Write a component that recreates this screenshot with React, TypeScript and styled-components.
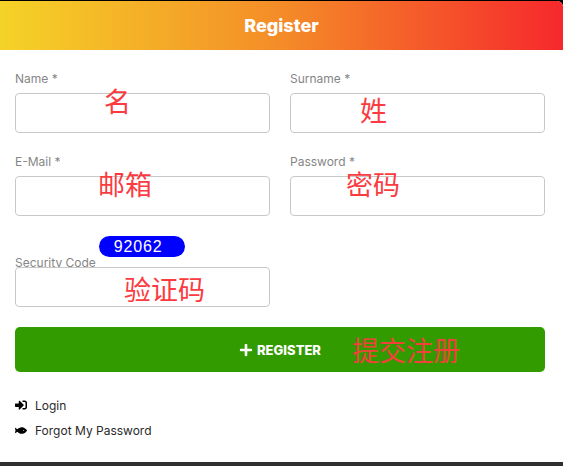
import React from 'react'
import styled, { createGlobalStyle } from 'styled-components'
import { FaFish, FaPlus, FaSignInAlt } from 'react-icons/fa'

const GlobalStyle = createGlobalStyle`
  html, body {
    margin: 0;
    padding: 0;
    background: #2f2f2f;
  }
  * {
    box-sizing: border-box;
  }
`

type Note = { text: string; left: number; top: number }

const fields: { label: string; note: Note }[] = [
  { label: 'Name *', note: { text: '名', left: 89, top: -10 } },
  { label: 'Surname *', note: { text: '姓', left: 70, top: -1 } },
  { label: 'E-Mail *', note: { text: '邮箱', left: 83, top: -10 } },
  { label: 'Password *', note: { text: '密码', left: 56, top: -10 } },
]

const App: React.FunctionComponent = () => {
  return (
    <>
      <GlobalStyle />
      <Page>
        <Card>
          <Header>Register</Header>
          <Body>
            <Grid>
              {fields.map((field) => (
                <Field key={field.label}>
                  <Label>{field.label}</Label>
                  <InputWrap>
                    <Input type="text" />
                    <Annotation $left={field.note.left} $top={field.note.top}>{field.note.text}</Annotation>
                  </InputWrap>
                </Field>
              ))}
              <Field>
                <CodeRow>
                  <Label>Security Code</Label>
                  <Code>92062</Code>
                </CodeRow>
                <InputWrap>
                  <Input type="text" />
                  <Annotation $left={109} $top={4}>验证码</Annotation>
                </InputWrap>
              </Field>
            </Grid>
            <Submit type="button">
              <FaPlus size={14} />
              <span>REGISTER</span>
              <ButtonNote>提交注册</ButtonNote>
            </Submit>
            <Links>
              <LinkRow>
                <FaSignInAlt size={12} />
                <span>Login</span>
              </LinkRow>
              <LinkRow>
                <FaFish size={13} />
                <span>Forgot My Password</span>
              </LinkRow>
            </Links>
          </Body>
        </Card>
      </Page>
    </>
  )
}

export default App

const Page = styled.div`
  width: 563px;
  height: 466px;
  padding-top: 1px;
  background: linear-gradient(#000 0, #000 50px, #2f2f2f 50px);
  overflow: hidden;
  font-family: "Inter", "Open Sans", "Liberation Sans", sans-serif;
`

const Card = styled.div`
  height: 461px;
  background: #fff;
  border-radius: 0 6px 0 0;
  overflow: hidden;
`

const Header = styled.div`
  height: 49px;
  display: flex;
  align-items: center;
  justify-content: center;
  background: linear-gradient(to right, #f5d327, #f48c28 50%, #f6282c);
  color: #fff;
  font-size: 18px;
  font-weight: 800;
`

const Body = styled.div`
  padding: 20px 18px 0 15px;
`

const Grid = styled.div`
  display: grid;
  grid-template-columns: 255px 255px;
  column-gap: 20px;
  row-gap: 20px;
`

const Field = styled.div`
  display: flex;
  flex-direction: column;
`

const Label = styled.label`
  height: 23px;
  padding-top: 1px;
  font-size: 12px;
  line-height: 16px;
  color: #868686;
`

const CodeRow = styled.div`
  display: flex;
  align-items: flex-end;
  gap: 3px;
  height: 30px;
  margin-bottom: 1px;

  ${Label} {
    height: 21px;
    padding-top: 9px;
    line-height: 14px;
    margin-bottom: -2px;
  }
`

const Code = styled.span`
  width: 86px;
  height: 21px;
  margin-bottom: 9px;
  padding-left: 15px;
  border-radius: 11px;
  background: #0000ff;
  color: #fff;
  font-family: "Liberation Sans", Arial, sans-serif;
  font-size: 16px;
  line-height: 21px;
  letter-spacing: 0.8px;
`

const InputWrap = styled.div`
  position: relative;
`

const Input = styled.input`
  display: block;
  width: 100%;
  height: 40px;
  border: 1px solid #c8c8c8;
  border-radius: 4px;
  background: #fff;
  outline: none;
`

const Annotation = styled.span<{ $left: number; $top: number }>`
  position: absolute;
  left: ${({ $left }) => $left}px;
  top: ${({ $top }) => $top}px;
  font-family: "Noto Sans CJK SC", sans-serif;
  font-size: 27px;
  line-height: 36px;
  color: #fb3b3f;
  white-space: nowrap;
`

const Submit = styled.button`
  position: relative;
  width: 530px;
  height: 45px;
  margin-top: 20px;
  display: flex;
  align-items: center;
  justify-content: center;
  gap: 4px;
  border: 0;
  border-radius: 5px;
  background: #319b00;
  color: #fff;
  font-family: inherit;
  font-size: 13px;
  font-weight: 800;
`

const ButtonNote = styled.span`
  position: absolute;
  left: 337px;
  top: 5px;
  font-family: "Noto Sans CJK SC", sans-serif;
  font-size: 27px;
  font-weight: 400;
  line-height: 36px;
  color: #f2403a;
  white-space: nowrap;
`

const Links = styled.div`
  display: flex;
  flex-direction: column;
  gap: 7px;
  margin-top: 24px;
`

const LinkRow = styled.a`
  display: flex;
  align-items: center;
  gap: 8px;
  height: 18px;
  font-size: 12px;
  color: #2a2a2a;

  svg {
    width: 12px;
    color: #000;
  }
`
